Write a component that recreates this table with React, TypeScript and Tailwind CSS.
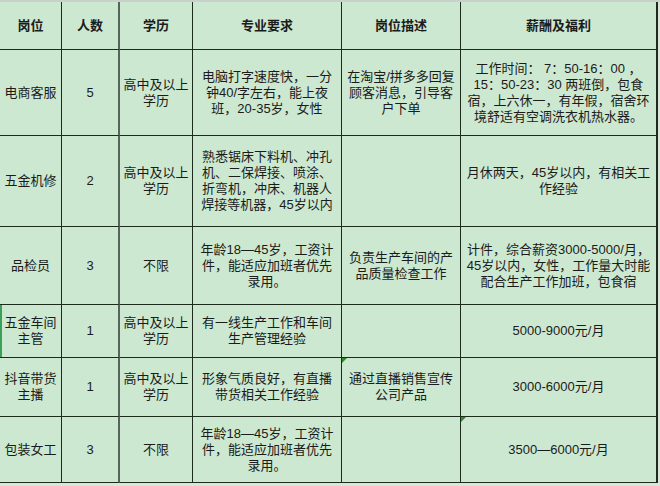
import React from "react";

type Row = {
  name: string[];
  count: string;
  edu: string[];
  req: string[];
  desc: string[];
  pay: string[];
  h: string;
  descMark?: boolean;
  payMark?: boolean;
  leftMark?: boolean;
};

const rows: Row[] = [
  {
    name: ["电商客服"],
    count: "5",
    edu: ["高中及以上", "学历"],
    req: ["电脑打字速度快，一分", "钟40/字左右，能上夜", "班，20-35岁，女性"],
    desc: ["在淘宝/拼多多回复", "顾客消息，引导客", "户下单"],
    pay: [
      "工作时间： 7：50-16：00 ，",
      "15：50-23：30 两班倒，包食",
      "宿，上六休一，有年假，宿舍环",
      "境舒适有空调洗衣机热水器。",
    ],
    h: "h-[86px]",
  },
  {
    name: ["五金机修"],
    count: "2",
    edu: ["高中及以上", "学历"],
    req: ["熟悉锯床下料机、冲孔", "机、二保焊接、喷涂、", "折弯机，冲床、机器人", "焊接等机器，45岁以内"],
    desc: [],
    pay: ["月休两天，45岁以内，有相关工", "作经验"],
    h: "h-[91px]",
  },
  {
    name: ["品检员"],
    count: "3",
    edu: ["不限"],
    req: ["年龄18—45岁，工资计", "件，能适应加班者优先", "录用。"],
    desc: ["负责生产车间的产", "品质量检查工作"],
    pay: ["计件，综合薪资3000-5000/月，", "45岁以内，女性，工作量大时能", "配合生产工作加班，包食宿"],
    h: "h-[78px]",
  },
  {
    name: ["五金车间", "主管"],
    count: "1",
    edu: ["高中及以上", "学历"],
    req: ["有一线生产工作和车间", "生产管理经验"],
    desc: [],
    pay: ["5000-9000元/月"],
    h: "h-[53px]",
    leftMark: true,
  },
  {
    name: ["抖音带货", "主播"],
    count: "1",
    edu: ["高中及以上", "学历"],
    req: ["形象气质良好，有直播", "带货相关工作经验"],
    desc: ["通过直播销售宣传", "公司产品"],
    pay: ["3000-6000元/月"],
    h: "h-[59px]",
    descMark: true,
  },
  {
    name: ["包装女工"],
    count: "3",
    edu: ["不限"],
    req: ["年龄18—45岁，工资计", "件，能适应加班者优先", "录用。"],
    desc: [],
    pay: ["3500—6000元/月"],
    h: "h-[66px]",
    payMark: true,
  },
];

function Lines({ lines }: { lines: string[] }) {
  return (
    <div className="text-center leading-[16px]">
      {lines.map((l, i) => (
        <div key={i} className="whitespace-nowrap">
          {l}
        </div>
      ))}
    </div>
  );
}

function Mark() {
  return (
    <div className="absolute left-0 top-0 w-0 h-0 border-t-[5px] border-t-[#2f8a2f] border-r-[5px] border-r-transparent"></div>
  );
}

const cell = "relative flex items-center justify-center border-b border-[#1d2b1d] overflow-hidden";

export default function App() {
  return (
    <div
      className="w-[660px] h-[486px] bg-[#dbe6db] overflow-hidden text-[13px] text-[#1b1b1b]"
      style={{ fontFamily: '"Liberation Sans", "Noto Sans CJK SC", sans-serif' }}
    >
      <div className="h-[2px] bg-[#c9d2c9]"></div>
      <div className="w-[658px] bg-[#cde8d0] border-r-2 border-[#1d2b1d]">
        {/* header */}
        <div className="flex h-[48px] font-bold">
          <div className={`${cell} w-[62px] border-r`}>岗位</div>
          <div className={`${cell} w-[58px] border-r-2 border-r-[#55655a]`}>人数</div>
          <div className={`${cell} w-[73px] border-r`}>学历</div>
          <div className={`${cell} w-[149px] border-r`}>专业要求</div>
          <div className={`${cell} w-[119px] border-r`}>岗位描述</div>
          <div className={`${cell} w-[195px]`}>薪酬及福利</div>
        </div>
        {rows.map((r, i) => (
          <div key={i} className={`flex ${r.h}`}>
            <div className={`${cell} w-[62px] border-r`}>
              {r.leftMark && <div className="absolute left-0 top-0 bottom-0 w-[2px] bg-[#3aa05a]"></div>}
              <Lines lines={r.name} />
            </div>
            <div className={`${cell} w-[58px] border-r-2 border-r-[#55655a]`}>
              <span className="text-[13px]">{r.count}</span>
            </div>
            <div className={`${cell} w-[73px] border-r`}>
              <Lines lines={r.edu} />
            </div>
            <div className={`${cell} w-[149px] border-r`}>
              <Lines lines={r.req} />
            </div>
            <div className={`${cell} w-[119px] border-r`}>
              {r.descMark && <Mark />}
              <Lines lines={r.desc} />
            </div>
            <div className={`${cell} w-[195px]`}>
              {r.payMark && <Mark />}
              <Lines lines={r.pay} />
            </div>
          </div>
        ))}
      </div>
    </div>
  );
}
